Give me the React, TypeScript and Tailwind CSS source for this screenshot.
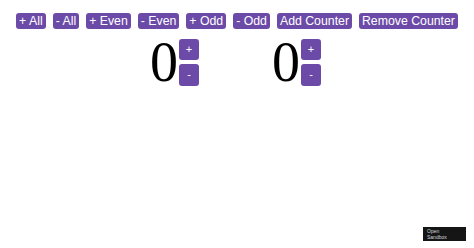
import React, { useState } from 'react';

const topButtons = ['+ All', '- All', '+ Even', '- Even', '+ Odd', '- Odd', 'Add Counter', 'Remove Counter'];

const Counter = ({ value }: { value: number }) => (
  <div className="flex items-center gap-[1px]">
    <span className="text-[56px] leading-none text-black" style={{ fontFamily: '"Liberation Serif", serif' }}>
      {value}
    </span>
    <div className="flex flex-col gap-[4px]">
      <button className="w-[20px] h-[21px] rounded-[3px] bg-[#6c4aa8] text-white text-[11px] leading-none">+</button>
      <button className="w-[20px] h-[22px] rounded-[3px] bg-[#6c4aa8] text-white text-[11px] leading-none">-</button>
    </div>
  </div>
);

export default function App() {
  const [counters] = useState([0, 0]);

  return (
    <div className="relative w-[474px] h-[248px] bg-white overflow-hidden" style={{ fontFamily: '"Liberation Sans", Arial, sans-serif' }}>
      {/* Barra de botões */}
      <div className="flex justify-center gap-[7px] pt-[13px]">
        {topButtons.map((label) => (
          <button key={label} className="h-[16px] px-[3px] rounded-[3px] bg-[#6c4aa8] text-white text-[12.3px] leading-none">
            {label}
          </button>
        ))}
      </div>

      {/* Contadores */}
      <div className="flex justify-center gap-[73px] mt-[5px] pr-[3px]">
        {counters.map((c, i) => (
          <Counter key={i} value={c} />
        ))}
      </div>

      {/* Selo do sandbox */}
      <div className="absolute left-[423px] top-[227px] w-[43px] h-[14px] bg-[#151515] px-[4px] pt-[1px] text-[5px] leading-[6px] text-gray-300">
        <div>Open</div>
        <div>Sandbox</div>
      </div>
    </div>
  );
}
